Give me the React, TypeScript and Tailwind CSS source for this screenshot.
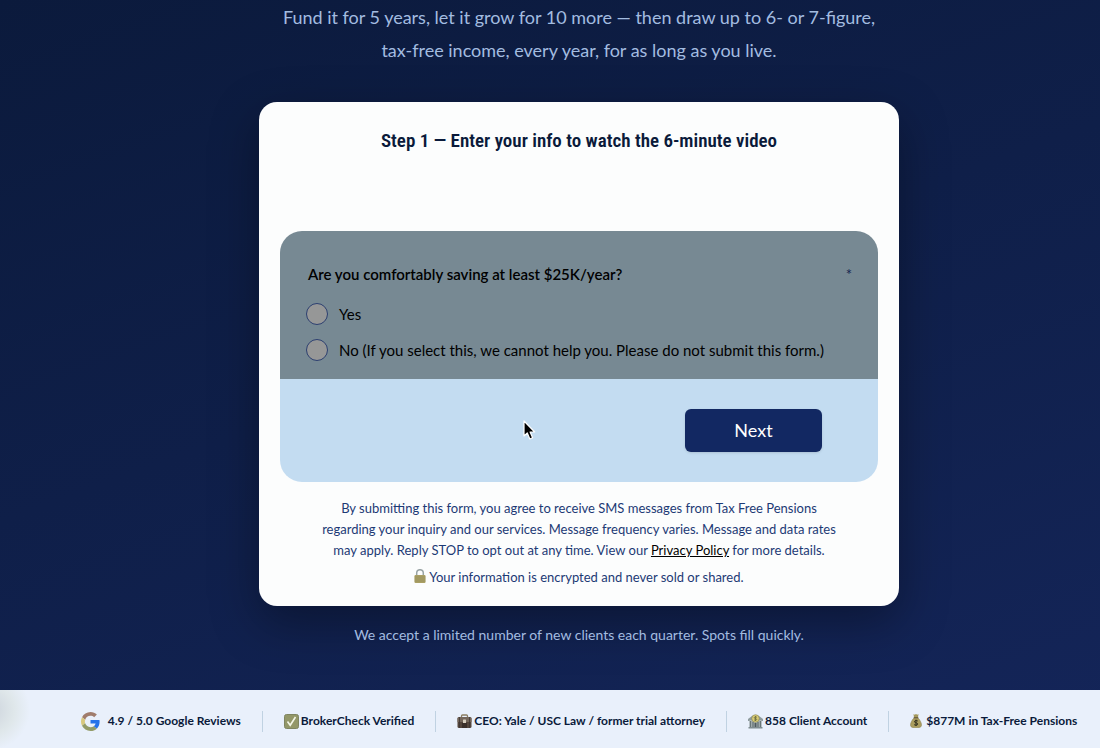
import React, { ReactNode, useState } from "react";

interface TrustItemProps {
	icon: ReactNode;
	label: string;
	/** Tailwind gap class between the icon and the label */
	gap?: string;
}

const GoogleIcon = () => (
	<svg className="h-[19px] w-[19px]" viewBox="0 0 48 48" aria-hidden="true">
		<path fill="#a07c6c" d="M24 9.5c3.5 0 6.700 1.200 9.200 3.600l6.900-6.900C35.900 2.400 30.500 0 24 0 14.600 0 6.500 5.400 2.600 13.200l8 6.200C12.400 13.700 17.700 9.500 24 9.500z" />
		<path fill="#2673ea" d="M47 24.600c0-1.600-.2-3.100-.4-4.600H24v9h12.900c-.6 3-2.300 5.500-4.800 7.200l7.700 6C44.400 38 47 31.900 47 24.600z" />
		<path fill="#d9c97e" d="M10.500 28.600c-.5-1.400-.8-3-.8-4.600s.3-3.200.8-4.600l-8-6.200C.9 16.500 0 20.100 0 24s.9 7.500 2.600 10.800l7.900-6.200z" />
		<path fill="#939b68" d="M24 48c6.500 0 11.900-2.100 15.900-5.800l-7.800-6c-2.100 1.500-4.900 2.300-8.100 2.300-6.300 0-11.600-4.200-13.500-9.900l-8 6.200C6.500 42.600 14.600 48 24 48z" />
	</svg>
);

const CheckIcon = () => (
	<svg className="h-[15px] w-[15px]" viewBox="0 0 15 15" aria-hidden="true">
		<rect x="0.500" y="0.500" width="14" height="14" rx="2" fill="#939768" stroke="#7f8560" />
		<path d="M3.500 7.500l2.700 3.800L11.500 3" fill="none" stroke="#f4f6e6" strokeWidth="1.600" />
	</svg>
);

const BriefcaseIcon = () => (
	<svg className="h-[15px] w-[15px]" viewBox="0 0 15 15" aria-hidden="true">
		<path d="M4.500 4V2q0-1 1-1h4q1 0 1 1v2" fill="none" stroke="#8b7d62" strokeWidth="1.300" />
		<rect x="0.500" y="3" width="14" height="11" rx="1.500" fill="#54463c" />
		<path d="M.5 5q0-2 1.500-2h11q1.500 0 1.500 2v3h-14z" fill="#74665a" />
		<path d="M2.500 3v11M12.500 3v11" stroke="#3d3531" strokeWidth="0.800" />
		<rect x="6" y="5.500" width="3" height="4" rx="0.500" fill="#d6cdbd" />
		<path d="M5 14V9h5v5z" fill="#3b302a" />
	</svg>
);

const BankIcon = () => (
	<svg className="h-[15px] w-[15px]" viewBox="0 0 15 15" aria-hidden="true">
		<path d="M0 5L4 2h7l4 3v2H0z" fill="#8e9b9e" />
		<rect x="1.500" y="6" width="12" height="8" fill="#aeb8ba" />
		<path d="M2.500 7v6M5 8v5M10 8v5M12.500 7v6" stroke="#687678" strokeWidth="1.400" />
		<rect x="6.500" y="9" width="2" height="5" fill="#4f5a5e" />
		<rect x="0.500" y="13" width="14" height="1.500" fill="#7f8c90" />
		<circle cx="7.500" cy="4.500" r="3.800" fill="#d8cb75" stroke="#82804d" strokeWidth="0.600" />
		<path d="M9 3.300q-1.400-.8-2.400-.2c-.9.700-.3 1.300.9 1.500s1.600.8.900 1.400q-1 .6-2.400-.2M7.500 2v5" fill="none" stroke="#5f6238" strokeWidth="0.700" />
	</svg>
);

const MoneyBagIcon = () => (
	<svg className="h-[14px] w-[12px]" viewBox="0 0 12 14" aria-hidden="true">
		<path d="M3.500 0l1.200.7L6 0l1.300.7L8.500 0 8 3.500H4z" fill="#a3985c" />
		<path d="M4 4h4c2 2 3.500 4.700 3.500 7 0 2-1.500 2.800-5.500 2.800S.5 13 .5 11C.5 8.700 2 6 4 4z" fill="#aa9d5e" stroke="#827a4c" strokeWidth="0.500" />
		<path d="M3.700 3.700h4.600" stroke="#5f5130" strokeWidth="1" />
		<path d="M7.800 7q-1.800-1-3 0c-.8 1 .1 1.600 1.200 1.800 1.400.3 2.300 1 1.300 2q-1.300.9-3.200-.1M6 5.700V12" fill="none" stroke="#2f2d1d" strokeWidth="1" />
	</svg>
);

const LockIcon = () => (
	<svg className="inline-block h-[14px] w-[12px] align-[-1px]" viewBox="0 0 12 14" aria-hidden="true">
		<path d="M2.700 7V4a3.300 3.300 0 016.600 0v3" fill="none" stroke="#99a4a5" strokeWidth="1.500" />
		<rect x="0.500" y="6" width="11" height="8" rx="1" fill="#aaa064" />
		<path d="M.5 8h11M.5 10h11M.5 12h11" stroke="#928b5a" strokeWidth="0.600" />
	</svg>
);

const Pointer = () => (
	<svg className="absolute left-[243px] top-[41px] h-[21px] w-[14px]" viewBox="0 0 14 21" aria-hidden="true">
		<path d="M1 1v15l3.300-3 2.500 6 2.800-1.200-2.500-5.800h4.600z" fill="#000" stroke="#fff" strokeWidth="1.200" strokeLinejoin="round" />
	</svg>
);

const TrustItem = ({ icon, label, gap = "gap-0.5" }: TrustItemProps) => (
	<li className={["flex items-center whitespace-nowrap px-[21px]", gap].join(" ")}>
		{icon}
		<span>{label}</span>
	</li>
);

const options = [
	{ id: "yes", label: "Yes" },
	{
		id: "no",
		label: "No (If you select this, we cannot help you. Please do not submit this form.)",
	},
];

const QualifyForm = () => {
	const [answer, setAnswer] = useState("");

	return (
		<form
			className="mt-[75px] overflow-hidden rounded-[22px]"
			onSubmit={(e) => e.preventDefault()}
		>
			<fieldset className="bg-[#778993] pt-[31px] pr-6 pb-[17px] pl-[26px] text-black">
				<legend className="float-left flex w-full justify-between pr-0.5 pl-0.5 text-[15px] leading-6 font-semibold">
					<span>Are you comfortably saving at least $25K/year?</span>
					<span className="font-normal text-[#14254f]">*</span>
				</legend>
				<div className="clear-both flex flex-col gap-3 pt-4">
					{options.map((option) => (
						<label key={option.id} className="flex items-center gap-[11px] text-[15px] leading-6">
							<input
								type="radio"
								name="saving"
								value={option.id}
								checked={answer === option.id}
								onChange={() => setAnswer(option.id)}
								className="h-[22px] w-[22px] shrink-0 appearance-none rounded-full border border-[#2c3f70] bg-[#969797] checked:bg-[#122862]"
							/>
							{option.label}
						</label>
					))}
				</div>
			</fieldset>
			<div className="relative flex justify-end bg-[#c3dcf1] py-[30px] pr-14">
				<Pointer />
				<button
					type="submit"
					className="h-[43px] w-[137px] rounded-md bg-[#122862] pb-0.5 text-lg text-white shadow-sm"
				>
					Next
				</button>
			</div>
		</form>
	);
};

export default function App() {
	return (
		<div className="flex min-h-screen flex-col bg-linear-160 from-[#0b1a3c] to-[#142559] font-[Lato,sans-serif]">
			<main className="flex flex-1 flex-col items-center pt-px pl-[58px] text-center">
				<p className="text-lg leading-[33px] text-[#a3bce0]">
					Fund it for 5 years, let it grow for 10 more — then draw up to 6- or 7-figure,
					<br />
					tax-free income, every year, for as long as you live.
				</p>
				<section className="mt-[35px] w-full max-w-[640px] rounded-[18px] bg-[#fcfdfd] px-[21px] pt-6 pb-[18px] shadow-[0_16px_48px_rgba(0,0,0,0.35)]">
					<h2 className="font-['Roboto_Condensed',Roboto,sans-serif] text-[19px] leading-[30px] font-semibold text-[#0a1a3a]">
						Step 1 — Enter your info to watch the 6-minute video
					</h2>
					<div className="text-left">
						<QualifyForm />
					</div>
					<p className="mt-4 text-[13px] leading-[21px] text-[#1d3a75]">
						By submitting this form, you agree to receive SMS messages from Tax Free Pensions
						<br />
						regarding your inquiry and our services. Message frequency varies. Message and data rates
						<br />
						may apply. Reply STOP to opt out at any time. View our{" "}
						<a href="#privacy" className="text-black underline">
							Privacy Policy
						</a>{" "}
						for more details.
					</p>
					<p className="mt-1.5 text-[13px] leading-[21px] text-[#1d3a75]">
						<LockIcon /> Your information is encrypted and never sold or shared.
					</p>
				</section>
				<p className="mt-[17px] text-sm leading-6 text-[#a3bce0]">
					We accept a limited number of new clients each quarter. Spots fill quickly.
				</p>
			</main>
			<footer className="flex h-[58px] items-center justify-center bg-[#e9f0fb] bg-radial-[circle_at_-10px_20px] from-[#ccd3dc] from-0% via-[#dfe7ea] via-[24px] to-[#e9f0fb] to-[40px] pt-1 pl-[58px]">
				<ul className="flex h-[21px] items-stretch divide-x divide-[#c0d2e2] text-xs font-bold text-[#0a1a3a]">
					<TrustItem icon={<GoogleIcon />} label="4.9 / 5.0 Google Reviews" gap="gap-2" />
					<TrustItem icon={<CheckIcon />} label="BrokerCheck Verified" />
					<TrustItem icon={<BriefcaseIcon />} label="CEO: Yale / USC Law / former trial attorney" />
					<TrustItem icon={<BankIcon />} label="858 Client Account" />
					<TrustItem icon={<MoneyBagIcon />} label="$877M in Tax-Free Pensions" gap="gap-1" />
				</ul>
			</footer>
		</div>
	);
}
